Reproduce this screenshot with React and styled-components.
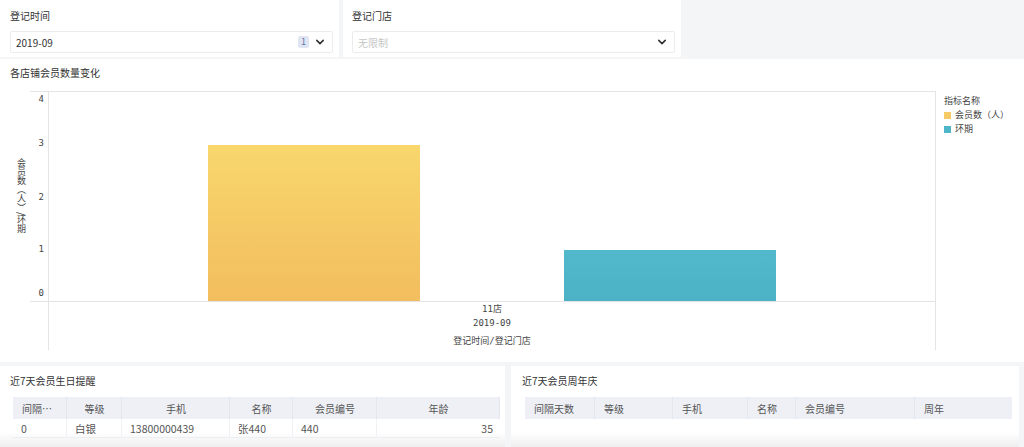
import React from 'react';
import styled, { createGlobalStyle } from 'styled-components';

const GlobalStyle = createGlobalStyle`
  html, body {
    margin: 0;
    padding: 0;
    background: #f4f5f7;
  }
  body {
    font-family: "Noto Sans CJK SC", "Noto Sans", sans-serif;
    color: #333;
  }
`;

const Page = styled.div`
  width: 1024px;
  height: 447px;
  overflow: hidden;
  display: flex;
  flex-direction: column;
`;

const FilterRow = styled.div`
  display: flex;
  gap: 4px;
  height: 57px;
  flex: none;
`;

const FilterPanel = styled.div`
  width: ${(props) => props.width}px;
  background: #fff;
  padding: 9px 6px 4px ${(props) => props.inset}px;
  box-sizing: border-box;
`;

const FilterLabel = styled.div`
  font-size: 10px;
  line-height: 14px;
  color: #333;
  margin-bottom: 8px;
`;

const Select = styled.div`
  display: flex;
  align-items: center;
  height: 22px;
  border: 1px solid #ececec;
  border-radius: 2px;
  padding: 0 7px 0 5px;
  box-sizing: border-box;
  font-size: 10px;
`;

const SelectValue = styled.div`
  flex: 1;
  color: ${(props) => (props.placeholder ? '#c6c6c6' : '#333')};
`;

const Badge = styled.span`
  background: #dfe5f2;
  color: #6277a8;
  font-size: 9px;
  line-height: 12px;
  padding: 0 3px;
  border-radius: 2px;
  margin-right: 6px;
`;

const ChartPanel = styled.div`
  margin-top: 2px;
  height: 303px;
  flex: none;
  background: #fff;
  padding-top: 7px;
  box-sizing: border-box;
`;

const PanelTitle = styled.div`
  font-size: 10px;
  line-height: 14px;
  color: #333;
  padding-left: ${(props) => props.inset}px;
`;

const ChartBody = styled.div`
  display: flex;
  margin-top: 5px;
  height: 270px;
`;

const AxisTitle = styled.div`
  width: 30px;
  height: 222px;
  display: flex;
  align-items: center;
  justify-content: center;
  padding-left: 12px;
  box-sizing: border-box;
  flex: none;

  span {
    writing-mode: vertical-rl;
    white-space: nowrap;
    font-size: 9px;
    line-height: 10px;
    color: #444;
  }
`;

const Legend = styled.div`
  padding: 9px 0 0 4px;
  font-size: 9px;
  line-height: 14px;
  color: #444;
`;

const LegendItem = styled.div`
  display: flex;
  align-items: center;
  gap: 4px;
`;

const Swatch = styled.span`
  width: 7px;
  height: 7px;
  background: ${(props) => props.color};
`;

const BottomRow = styled.div`
  display: flex;
  gap: 6px;
  margin-top: 4px;
  flex: 1;
`;

const TablePanel = styled.div`
  width: ${(props) => props.width}px;
  background: linear-gradient(#fff 82%, #eeeeee);
  padding-top: 8px;
  box-sizing: border-box;
`;

const Table = styled.div`
  display: grid;
  grid-template-columns: ${(props) => props.columns};
  width: 487px;
  margin: 9px 0 0 ${(props) => props.inset}px;
`;

const HeaderCell = styled.div`
  height: 22px;
  display: flex;
  align-items: center;
  justify-content: ${(props) => props.align || 'flex-start'};
  padding: 0 8px 0 9px;
  background: #eef0f5;
  border-right: 1px solid #e3e6ed;
  font-size: 10px;
  color: #555;
  white-space: nowrap;
  overflow: hidden;
  min-width: 0;

  &:last-child {
    border-right: none;
  }

  span {
    overflow: hidden;
    text-overflow: ellipsis;
  }
`;

const DataCell = styled.div`
  height: 18px;
  display: flex;
  align-items: center;
  justify-content: ${(props) => props.align || 'flex-start'};
  padding: 0 7px 0 8px;
  border-right: 1px solid #f0f1f4;
  border-bottom: 1px solid #eceef2;
  font-size: 10.5px;
  color: #555;
  white-space: nowrap;

  &:last-child {
    border-right: none;
  }
`;

const Chevron = () => (
  <svg width="10" height="10" viewBox="0 0 10 10">
    <path d="M1.8 3.4 L5 6.6 L8.2 3.4" fill="none" stroke="#333" strokeWidth="1.6" strokeLinecap="round" strokeLinejoin="round" />
  </svg>
);

const axisFont = '"DejaVu Sans Mono", "Noto Sans CJK SC", monospace';

// plot drawn from x = 30 of the panel, so the viewBox starts at 30
const MemberChart = () => (
  <svg width="910" height="270" viewBox="30 0 910 270">
    <defs>
      <linearGradient id="yellowBar" x1="0" y1="0" x2="0" y2="1">
        <stop offset="0" stopColor="#f8d76d" />
        <stop offset="1" stopColor="#f2bd5e" />
      </linearGradient>
      <linearGradient id="tealBar" x1="0" y1="0" x2="0" y2="1">
        <stop offset="0" stopColor="#52b8cb" />
        <stop offset="1" stopColor="#4bb2c6" />
      </linearGradient>
    </defs>
    <g stroke="#e4e4e4" strokeWidth="1">
      <line x1="15" y1="6.5" x2="935" y2="6.5" />
      <line x1="15" y1="216.5" x2="935" y2="216.5" />
      <line x1="48.5" y1="6" x2="48.5" y2="265" />
      <line x1="935.5" y1="6" x2="935.5" y2="265" />
    </g>
    <g fontFamily={axisFont} fontSize="9" fill="#444" textAnchor="end" dominantBaseline="middle">
      <text x="44" y="14">4</text>
      <text x="44" y="58">3</text>
      <text x="44" y="112">2</text>
      <text x="44" y="164">1</text>
      <text x="44" y="208">0</text>
    </g>
    <rect x="208" y="60" width="212" height="156" fill="url(#yellowBar)" />
    <rect x="564" y="165" width="212" height="51" fill="url(#tealBar)" />
    <g fontFamily={axisFont} fontSize="9" fill="#444" textAnchor="middle" dominantBaseline="middle">
      <text x="492" y="224">11店</text>
      <text x="492" y="238">2019-09</text>
      <text x="492" y="256">登记时间/登记门店</text>
    </g>
  </svg>
);

const birthdayColumns = '54px 55px 108px 63px 84px 123px';
const anniversaryColumns = '70px 78px 75px 48px 119px 97px';

export default function App() {
  return (
    <Page>
      <GlobalStyle />
      <FilterRow>
        <FilterPanel width={339} inset={10}>
          <FilterLabel>登记时间</FilterLabel>
          <Select>
            <SelectValue>2019-09</SelectValue>
            <Badge>1</Badge>
            <Chevron />
          </Select>
        </FilterPanel>
        <FilterPanel width={338} inset={9}>
          <FilterLabel>登记门店</FilterLabel>
          <Select>
            <SelectValue placeholder>无限制</SelectValue>
            <Chevron />
          </Select>
        </FilterPanel>
      </FilterRow>

      <ChartPanel>
        <PanelTitle inset={10}>各店铺会员数量变化</PanelTitle>
        <ChartBody>
          <AxisTitle><span>会员数（人）/环期</span></AxisTitle>
          <MemberChart />
          <Legend>
            <div>指标名称</div>
            <LegendItem><Swatch color="#f5cb66" />会员数（人）</LegendItem>
            <LegendItem><Swatch color="#4fb5c8" />环期</LegendItem>
          </Legend>
        </ChartBody>
      </ChartPanel>

      <BottomRow>
        <TablePanel width={505}>
          <PanelTitle inset={10}>近7天会员生日提醒</PanelTitle>
          <Table columns={birthdayColumns} inset={13}>
            <HeaderCell><span>间隔天数</span></HeaderCell>
            <HeaderCell align="center">等级</HeaderCell>
            <HeaderCell align="center">手机</HeaderCell>
            <HeaderCell align="center">名称</HeaderCell>
            <HeaderCell align="center">会员编号</HeaderCell>
            <HeaderCell align="center">年龄</HeaderCell>
            <DataCell>0</DataCell>
            <DataCell>白银</DataCell>
            <DataCell>13800000439</DataCell>
            <DataCell>张440</DataCell>
            <DataCell>440</DataCell>
            <DataCell align="flex-end">35</DataCell>
          </Table>
        </TablePanel>
        <TablePanel width={508}>
          <PanelTitle inset={11}>近7天会员周年庆</PanelTitle>
          <Table columns={anniversaryColumns} inset={14}>
            <HeaderCell>间隔天数</HeaderCell>
            <HeaderCell>等级</HeaderCell>
            <HeaderCell>手机</HeaderCell>
            <HeaderCell>名称</HeaderCell>
            <HeaderCell>会员编号</HeaderCell>
            <HeaderCell>周年</HeaderCell>
          </Table>
        </TablePanel>
      </BottomRow>
    </Page>
  );
}
